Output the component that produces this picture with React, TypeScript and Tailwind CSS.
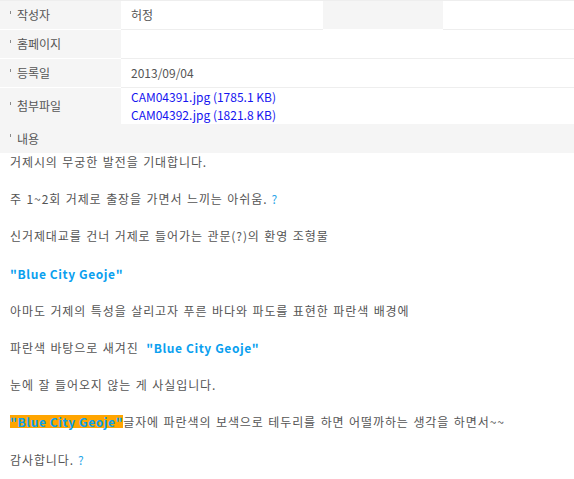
import React from "react";

const FONT = { fontFamily: '"Noto Sans CJK KR", "Noto Sans", sans-serif' };

function Label({ text, className = "" }: { text: string; className?: string }) {
  return (
    <div className={`w-[121px] shrink-0 bg-[#f5f5f5] border-b border-white flex items-center pl-[10px] ${className}`}>
      <span className="w-px h-[3px] bg-[#8a8a8a] mr-[6px] -mt-[6px]" />
      <span>{text}</span>
    </div>
  );
}

function Blue({ children }: { children: React.ReactNode }) {
  return <span className="font-bold text-[#0aa0ef] tracking-[0.6px] [word-spacing:0px]">{children}</span>;
}

function Q() {
  return <span className="text-[#2aa5e8] ml-[4px]">?</span>;
}

export default function App() {
  const paragraphs: React.ReactNode[] = [
    "거제시의 무궁한 발전을 기대합니다.",
    <>
      주 1~2회 거제로 출장을 가면서 느끼는 아쉬움.
      <Q />
    </>,
    "신거제대교를 건너 거제로 들어가는 관문(?)의 환영 조형물",
    <Blue>"Blue City Geoje"</Blue>,
    "아마도 거제의 특성을 살리고자 푸른 바다와 파도를 표현한 파란색 배경에",
    <>
      파란색 바탕으로 새겨진 <span className="ml-[3px]" />
      <Blue>"Blue City Geoje"</Blue>
    </>,
    "눈에 잘 들어오지 않는 게 사실입니다.",
    <>
      <span className="inline-block bg-[#ffa500] leading-[13px]">
        <Blue>"Blue City Geoje"</Blue>
      </span>
      글자에 파란색의 보색으로 테두리를 하면 어떨까하는 생각을 하면서~~
    </>,
    <>
      감사합니다.
      <Q />
    </>,
  ];

  return (
    <div className="w-[574px] h-[479px] bg-white text-[12px] text-[#555] overflow-hidden" style={FONT}>
      {/* info table */}
      <div className="flex h-[30px] border-t border-[#eeeeee]">
        <Label text="작성자" />
        <div className="w-[202px] flex items-center pl-[10px] border-b border-[#eeeeee]">허정</div>
        <div className="w-[120px] bg-[#f5f5f5] border-b border-white" />
        <div className="flex-1 border-b border-[#eeeeee]" />
      </div>
      <div className="flex h-[29px]">
        <Label text="홈페이지" />
        <div className="flex-1 border-b border-[#eeeeee]" />
      </div>
      <div className="flex h-[29px]">
        <Label text="등록일" />
        <div className="flex-1 flex items-center pl-[10px] border-b border-[#eeeeee]">2013/09/04</div>
      </div>
      <div className="flex h-[36px]">
        <Label text="첨부파일" className="border-b-0" />
        <div className="flex-1 flex flex-col justify-center pl-[10px] leading-[18px] text-[#1515f0]">
          <span>CAM04391.jpg (1785.1 KB)</span>
          <span>CAM04392.jpg (1821.8 KB)</span>
        </div>
      </div>
      <div className="h-[29px] bg-[#f5f5f5] flex items-center pl-[10px]">
        <span className="w-px h-[3px] bg-[#8a8a8a] mr-[6px] -mt-[6px]" />
        <span>내용</span>
      </div>

      {/* content */}
      <div className="px-[10px] leading-[18.6px] tracking-[0.9px] [word-spacing:1px]">
        {paragraphs.map((p, i) => (
          <p key={i} className="mb-[18.6px] whitespace-nowrap">
            {p}
          </p>
        ))}
      </div>
    </div>
  );
}
